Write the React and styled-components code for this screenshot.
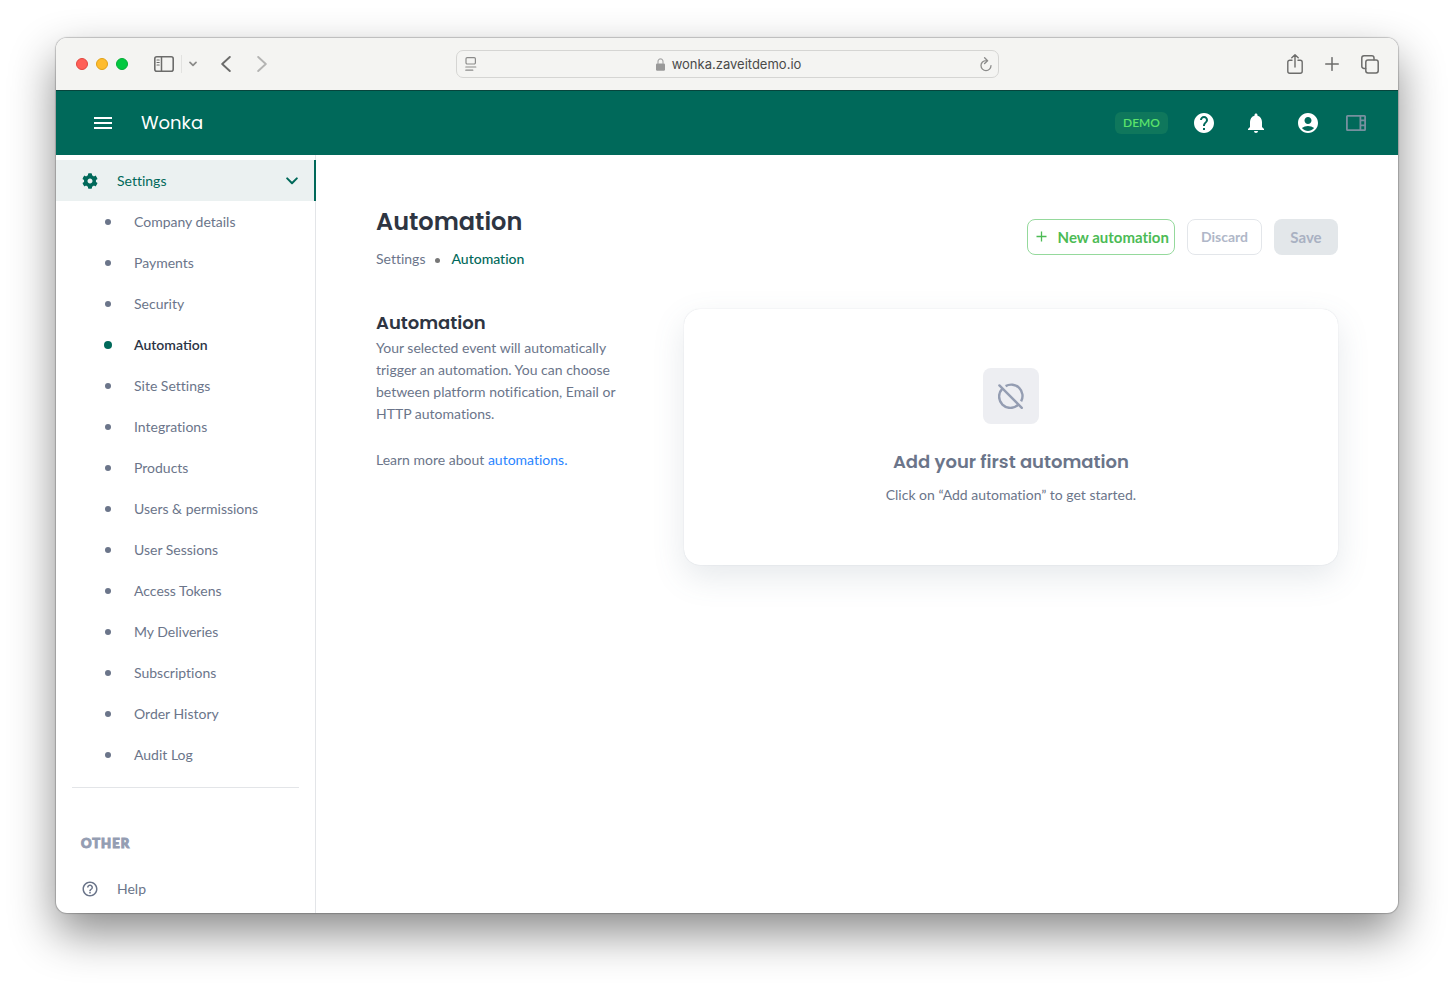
import React from "react";
import styled, { createGlobalStyle } from "styled-components";
import { FaCog } from "react-icons/fa";
import {
  MdAccountCircle,
  MdHelp,
  MdHelpOutline,
  MdMenu,
  MdNotifications,
} from "react-icons/md";

const links = [
  "Company details",
  "Payments",
  "Security",
  "Automation",
  "Site Settings",
  "Integrations",
  "Products",
  "Users & permissions",
  "User Sessions",
  "Access Tokens",
  "My Deliveries",
  "Subscriptions",
  "Order History",
  "Audit Log",
];

export default function App() {
  return (
    <Page>
      <GlobalStyle />
      <Window>
        <TitleBar />
        <Header />
        <Body>
          <Sidebar />
          <Content />
        </Body>
      </Window>
    </Page>
  );
}

function TitleBar() {
  return (
    <Chrome>
      <ChromeLeft>
        <Lights>
          <Light $color="#ff5f57" $edge="#e2463f" />
          <Light $color="#febc2e" $edge="#e1a116" />
          <Light $color="#02c840" $edge="#03ab36" />
        </Lights>
        <SidebarControls>
          <ChromeButton aria-label="Show sidebar">
            <svg width="20" height="16" viewBox="0 0 20 16">
              <rect x="0.8" y="0.8" width="18.4" height="14.4" rx="2" strokeWidth="1.6" />
              <path d="M7.5 1v14" strokeWidth="1.5" />
              <path d="M3 4h2.2M3 6.5h2.2M3 9h2.2" strokeWidth="1.1" />
            </svg>
          </ChromeButton>
          <ChromeLine />
          <ChromeButton aria-label="Tab groups" $soft>
            <svg width="8" height="6" viewBox="0 0 8 6">
              <path d="M1 1.4l3 3 3-3" strokeWidth="1.7" />
            </svg>
          </ChromeButton>
        </SidebarControls>
        <History>
          <ChromeButton aria-label="Back">
            <svg width="10" height="16" viewBox="0 0 10 16">
              <path d="M8.8 1L1.2 8l7.6 7" strokeWidth="1.9" />
            </svg>
          </ChromeButton>
          <ChromeButton aria-label="Forward" $faded>
            <svg width="10" height="16" viewBox="0 0 10 16">
              <path d="M1.2 1l7.6 7-7.6 7" strokeWidth="1.9" />
            </svg>
          </ChromeButton>
        </History>
      </ChromeLeft>
      <Address>
        <ChromeButton aria-label="Page menu" $soft>
          <svg width="12" height="14" viewBox="0 0 12 14">
            <rect x="1" y="0.6" width="9.4" height="6.4" rx="1.2" strokeWidth="1.2" />
            <path d="M0.8 10h10M0.8 13.2h7" strokeWidth="1.2" />
          </svg>
        </ChromeButton>
        <Url>
          <svg width="9" height="13" viewBox="0 0 9 13">
            <rect x="0" y="5.4" width="9" height="7.4" rx="1.2" fill="#999" />
            <path d="M2 6V3.4a2.5 2.5 0 0 1 5 0V6" fill="none" stroke="#aaa" strokeWidth="1.2" />
          </svg>
          wonka.zaveitdemo.io
        </Url>
        <ChromeButton aria-label="Reload" $soft>
          <svg width="12" height="15" viewBox="0 0 12 15">
            <path d="M6 3.6a5 5 0 1 0 5 5M4.6 0.8l3 2.9-3 2.8" strokeWidth="1.3" />
          </svg>
        </ChromeButton>
      </Address>
      <ChromeRight>
        <ChromeButton aria-label="Share">
          <svg width="16" height="20" viewBox="0 0 16 20">
            <path
              d="M5 6.2H2.8a2 2 0 0 0-2 2v9a2 2 0 0 0 2 2h10.4a2 2 0 0 0 2-2v-9a2 2 0 0 0-2-2H11M8 13V1M4.8 3.8L8 0.8l3.2 3"
              strokeWidth="1.4"
            />
          </svg>
        </ChromeButton>
        <ChromeButton aria-label="New tab">
          <svg width="14" height="14" viewBox="0 0 14 14">
            <path d="M7 0.7v12.6M0.7 7h12.6" strokeWidth="1.5" />
          </svg>
        </ChromeButton>
        <ChromeButton aria-label="Show tabs">
          <svg width="18" height="19" viewBox="0 0 18 19">
            <rect x="4.8" y="5" width="12.4" height="13" rx="2.2" strokeWidth="1.5" />
            <path
              d="M4.6 13.4H3a2.2 2.2 0 0 1-2.2-2.2V3A2.2 2.2 0 0 1 3 0.8h7.8A2.2 2.2 0 0 1 13 3v1.8"
              strokeWidth="1.5"
            />
          </svg>
        </ChromeButton>
      </ChromeRight>
    </Chrome>
  );
}

function Header() {
  return (
    <AppBar>
      <IconButton aria-label="Toggle menu">
        <MdMenu size={24} />
      </IconButton>
      <Brand>Wonka</Brand>
      <Actions>
        <DemoBadge>DEMO</DemoBadge>
        <IconButton aria-label="Help">
          <MdHelp size={24} />
        </IconButton>
        <IconButton aria-label="Notifications">
          <MdNotifications size={24} />
        </IconButton>
        <IconButton aria-label="Account">
          <MdAccountCircle size={24} />
        </IconButton>
      </Actions>
      <IconButton aria-label="Side panel" $muted>
        <svg width="20" height="16" viewBox="0 0 20 16" fill="none" stroke="currentColor">
          <rect x="0.9" y="0.9" width="18.2" height="14.2" rx="0.6" strokeWidth="1.8" />
          <path d="M14.4 1v14M14.4 5.4H19M14.4 10.4H19" strokeWidth="1.8" />
        </svg>
      </IconButton>
    </AppBar>
  );
}

function Sidebar() {
  return (
    <Nav>
      <SettingsToggle aria-expanded="true">
        <FaCog size={16} />
        <span>Settings</span>
        <svg width="12" height="8" viewBox="0 0 12 8">
          <path
            d="M1.2 1.4L6 6.2l4.8-4.8"
            fill="none"
            stroke="currentColor"
            strokeWidth="2"
            strokeLinecap="round"
            strokeLinejoin="round"
          />
        </svg>
      </SettingsToggle>
      <NavList>
        {links.map((name) => (
          <li key={name}>
            <NavLink href="#" $active={name === "Automation"}>
              {name}
            </NavLink>
          </li>
        ))}
      </NavList>
      <Divider />
      <NavHeading>Other</NavHeading>
      <HelpLink href="#">
        <MdHelpOutline size={18} />
        Help
      </HelpLink>
    </Nav>
  );
}

function Content() {
  return (
    <Main>
      <PageHead>
        <div>
          <PageTitle>Automation</PageTitle>
          <Breadcrumbs>
            <a href="#">Settings</a>
            <Separator />
            <Current>Automation</Current>
          </Breadcrumbs>
        </div>
        <ButtonRow>
          <NewButton>
            <svg width="11" height="11" viewBox="0 0 11 11">
              <path d="M5.5 0.5v10M0.5 5.5h10" stroke="currentColor" strokeWidth="1.3" />
            </svg>
            New automation
          </NewButton>
          <DiscardButton disabled>Discard</DiscardButton>
          <SaveButton disabled>Save</SaveButton>
        </ButtonRow>
      </PageHead>
      <Section>
        <Intro>
          <SectionTitle>Automation</SectionTitle>
          <Text>
            Your selected event will automatically trigger an automation. You can choose between
            platform notification, Email or HTTP automations.
          </Text>
          <LearnMore>
            Learn more about <a href="#">automations.</a>
          </LearnMore>
        </Intro>
        <Card>
          <EmptyIcon>
            <svg width="26" height="26" viewBox="0 0 26 26">
              <g fill="none" stroke="#949db2" strokeWidth="2.4">
                <path d="M7.6 3.1A11.3 11.3 0 0 1 23.1 18.4" />
                <path d="M4.4 5.6A11.3 11.3 0 0 0 20.4 21.6" />
                <path d="M1.4 2.4L23.8 24.8" strokeLinecap="round" />
              </g>
            </svg>
          </EmptyIcon>
          <EmptyTitle>Add your first automation</EmptyTitle>
          <Text>Click on “Add automation” to get started.</Text>
        </Card>
      </Section>
    </Main>
  );
}

const GlobalStyle = createGlobalStyle`
  * {
    box-sizing: border-box;
  }
  body {
    margin: 0;
    background: #fff;
    color: #6b758a;
    font-family: Lato, "Liberation Sans", sans-serif;
    font-size: 14px;
    line-height: 22px;
    font-variant-ligatures: none;
  }
  button {
    font: inherit;
    font-variant-ligatures: inherit;
    border: 0;
    padding: 0;
    background: none;
  }
  a {
    color: inherit;
    text-decoration: none;
  }
  svg {
    display: block;
    flex: none;
  }
`;

const Page = styled.div`
  min-height: 100vh;
  padding: 38px 56px 74px;
  display: flex;
`;

const Window = styled.div`
  flex: 1;
  min-width: 0;
  display: flex;
  flex-direction: column;
  border-radius: 11px;
  overflow: hidden;
  background: #fff;
  box-shadow: 0 0 1px 1px rgba(0, 0, 0, 0.2), 0 20px 46px rgba(0, 0, 0, 0.46);
`;

const Chrome = styled.div`
  display: grid;
  grid-template-columns: 1fr minmax(0, 543px) 1fr;
  align-items: center;
  height: 53px;
  padding: 0 19px 0 20px;
  background: #f4f4f2;
  border-bottom: 1px solid #07443c;
`;

const ChromeLeft = styled.div`
  display: flex;
  align-items: center;
`;

const ChromeRight = styled.div`
  display: flex;
  align-items: center;
  justify-content: flex-end;
  gap: 22px;
`;

const Lights = styled.div`
  display: flex;
  gap: 8px;
`;

const Light = styled.span`
  width: 12px;
  height: 12px;
  border-radius: 50%;
  background: ${(p) => p.$color};
  border: 1px solid ${(p) => p.$edge};
`;

const SidebarControls = styled.div`
  display: flex;
  align-items: center;
  gap: 7px;
  margin-left: 26px;
`;

const ChromeLine = styled.span`
  width: 1px;
  height: 18px;
  background: #e2e2e0;
`;

const History = styled.div`
  display: flex;
  gap: 26px;
  margin-left: 24px;
`;

const ChromeButton = styled.button`
  color: ${(p) => (p.$faded ? "#b4b4b3" : p.$soft ? "#8b8b8a" : "#6c6c6b")};

  svg {
    fill: none;
    stroke: currentColor;
    stroke-linecap: round;
    stroke-linejoin: round;
  }
`;

const Address = styled.div`
  display: flex;
  align-items: center;
  justify-content: space-between;
  height: 28px;
  padding: 0 6px 0 8px;
  border: 1px solid #d5d5d3;
  border-radius: 7px;
`;

const Url = styled.div`
  display: flex;
  align-items: center;
  gap: 7px;
  font-family: Inter, sans-serif;
  font-size: 13px;
  color: #4a4a49;
`;

const AppBar = styled.header`
  display: flex;
  align-items: center;
  height: 64px;
  padding: 0 32px 0 35px;
  background: #00695a;
  color: #fff;
`;

const IconButton = styled.button`
  color: ${(p) => (p.$muted ? "#76909f" : "inherit")};
`;

const Brand = styled.span`
  margin-left: 26px;
  font-family: Poppins, Inter, sans-serif;
  font-size: 18px;
`;

const Actions = styled.div`
  display: flex;
  align-items: center;
  gap: 28px;
  margin: 0 26px 0 auto;
`;

const DemoBadge = styled.span`
  padding: 0 8px;
  margin-right: -4px;
  border-radius: 6px;
  background: #0f775c;
  color: #5be36b;
  font-size: 12px;
  font-weight: 600;
`;

const Body = styled.div`
  flex: 1;
  display: flex;
`;

const Nav = styled.nav`
  flex: none;
  width: 260px;
  padding-top: 5px;
  border-right: 1px solid #e3e5e8;
`;

const SettingsToggle = styled.button`
  display: flex;
  align-items: center;
  width: 260px;
  height: 41px;
  padding: 0 16px 0 26px;
  background: #ebf1f1;
  border-right: 2px solid #00695a;
  color: #00695a;

  span {
    flex: 1;
    margin-left: 19px;
    text-align: left;
  }
`;

const NavList = styled.ul`
  margin: 0;
  padding: 0;
  list-style: none;
`;

const NavLink = styled.a`
  display: flex;
  align-items: center;
  height: 41px;
  padding-left: 48px;
  color: ${(p) => (p.$active ? "#2b3445" : "inherit")};
  font-weight: ${(p) => (p.$active ? 600 : 400)};
  font-variant-ligatures: ${(p) => (p.$active ? "normal" : "none")};

  &::before {
    content: "";
    width: ${(p) => (p.$active ? 8 : 6)}px;
    height: ${(p) => (p.$active ? 8 : 6)}px;
    margin: 0 ${(p) => (p.$active ? "22px 0 0" : "23px 0 1px")};
    border-radius: 50%;
    background: ${(p) => (p.$active ? "#00695a" : "#6b758a")};
  }
`;

const Divider = styled.hr`
  height: 1px;
  margin: 12px 16px 44px;
  border: 0;
  background: #e3e5e8;
`;

const NavHeading = styled.h2`
  margin: 0 0 14px;
  padding-left: 25px;
  font-size: 13px;
  line-height: 22px;
  font-weight: 900;
  letter-spacing: 1px;
  text-transform: uppercase;
  color: #949db2;
  -webkit-text-stroke: 1px #949db2;
`;

const HelpLink = styled.a`
  display: flex;
  align-items: center;
  gap: 18px;
  height: 41px;
  padding-left: 25px;
`;

const Main = styled.main`
  flex: 1;
  min-width: 0;
  padding: 48px 60px;
`;

const PageHead = styled.div`
  display: flex;
  justify-content: space-between;
  align-items: center;
`;

const PageTitle = styled.h1`
  margin: 0;
  font-family: Poppins, Inter, sans-serif;
  font-size: 24px;
  font-weight: 600;
  line-height: 38px;
  color: #2e3542;
`;

const Breadcrumbs = styled.nav`
  display: flex;
  align-items: center;
  margin-top: 7px;
`;

const Separator = styled.span`
  width: 5px;
  height: 5px;
  margin: 3px 11px 0 10px;
  border-radius: 50%;
  background: #777;
`;

const Current = styled.span`
  color: #00695a;
  font-weight: 500;
`;

const ButtonRow = styled.div`
  display: flex;
  gap: 12px;
`;

const Button = styled.button`
  height: 36px;
  border-radius: 8px;
  font-size: 15px;
  font-weight: 700;
`;

const NewButton = styled(Button)`
  display: flex;
  align-items: center;
  gap: 11px;
  padding: 0 5px 0 8px;
  border: 1px solid #95d99c;
  color: #4cbb55;
`;

const DiscardButton = styled(Button)`
  padding: 0 13px;
  border: 1px solid #e3e6ea;
  color: #b0b7c8;
  font-size: 14px;
`;

const SaveButton = styled(Button)`
  min-width: 64px;
  padding: 0 16px;
  background: #e3e7ea;
  color: #a9b1c2;
`;

const Section = styled.section`
  display: grid;
  grid-template-columns: 8fr 17fr;
  align-items: start;
  margin-top: 39px;
`;

const Intro = styled.div`
  padding-right: 60px;
`;

const SectionTitle = styled.h2`
  margin: 0;
  font-family: Poppins, Inter, sans-serif;
  font-size: 18px;
  font-weight: 600;
  line-height: 28px;
  color: #2e3542;
`;

const Text = styled.p`
  margin: 0;
`;

const LearnMore = styled(Text)`
  margin-top: 24px;

  a {
    color: #2a85ff;
  }
`;

const Card = styled.div`
  display: flex;
  flex-direction: column;
  align-items: center;
  padding: 59px 24px;
  border-radius: 16px;
  box-shadow: 0 0 1px rgba(90, 105, 130, 0.28), 0 12px 32px rgba(90, 105, 130, 0.15);
`;

const EmptyIcon = styled.div`
  display: grid;
  place-items: center;
  width: 56px;
  height: 56px;
  border-radius: 8px;
  background: #edeef2;
`;

const EmptyTitle = styled.h3`
  margin: 24px 0 8px;
  font-family: Poppins, Inter, sans-serif;
  font-size: 18px;
  font-weight: 600;
  line-height: 28px;
  color: #6b758a;
`;
